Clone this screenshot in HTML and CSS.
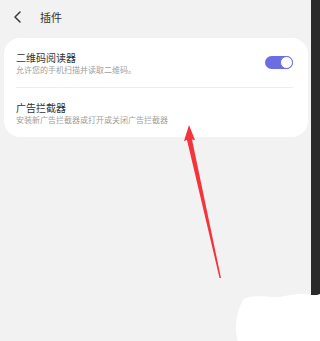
FILE: index.html
```html
<!DOCTYPE html>
<html lang="zh-CN">
<head>
    <meta charset="UTF-8">
    <meta name="viewport" content="width=device-width, initial-scale=1.0">
    <title>插件</title>
    <link rel="stylesheet" href="styles.css">
</head>
<body>
    <div class="screen">
        <div class="header">
            <svg class="back-icon" width="10" height="12" viewBox="0 0 10 12">
                <path d="M7 1 L2 6 L7 11" fill="none" stroke="#3a3a3a" stroke-width="1.5" stroke-linecap="round" stroke-linejoin="round"/>
            </svg>
            <span class="title">插件</span>
        </div>

        <div class="card">
            <div class="row">
                <div class="row-text">
                    <div class="row-title">二维码阅读器</div>
                    <div class="row-desc">允许您的手机扫描并读取二维码。</div>
                </div>
                <div class="toggle on"><span class="knob"></span></div>
            </div>
            <div class="divider"></div>
            <div class="row">
                <div class="row-text">
                    <div class="row-title">广告拦截器</div>
                    <div class="row-desc">安装新广告拦截器或打开或关闭广告拦截器</div>
                </div>
            </div>
        </div>

        <svg class="arrow" width="320" height="341" viewBox="0 0 320 341">
            <rect x="311" y="0" width="9" height="295" fill="#2a2a2a"/>
            <polygon points="189,125 195,140 192,139.5 221,278 219.5,278 187,140 184,141" fill="#f5333a"/>
            <path d="M243 300 C250 294 266 297 280 297 C294 294 306 292 314 296 L320 294 L320 341 L238 341 C234 330 236 312 243 300 Z" fill="#ffffff"/>
        </svg>
    </div>
</body>
</html>
```

FILE: styles.css
```css
body {
    margin: 0;
    font-family: "Noto Sans CJK SC", "Noto Sans", sans-serif;
    background-color: #f2f2f2;
}
.screen {
    position: relative;
    width: 320px;
    height: 341px;
    overflow: hidden;
    background-color: #f2f2f2;
}
.header {
    display: flex;
    align-items: center;
    height: 34px;
    padding-left: 13px;
}
.back-icon {
    margin-right: 17px;
}
.title {
    font-size: 11px;
    color: #333;
}
.card {
    margin: 4px 12px 0 4px;
    background-color: #fff;
    border-radius: 16px;
    padding: 0 15px 0 12px;
}
.row {
    display: flex;
    align-items: center;
    height: 49px;
}
.row-text {
    flex: 1;
}
.row-title {
    font-size: 10px;
    color: #333;
    line-height: 13px;
}
.row-desc {
    font-size: 8px;
    color: #a0a0a0;
    line-height: 11px;
}
.divider {
    height: 1px;
    background-color: #eeeeee;
}
.toggle {
    position: relative;
    width: 28px;
    height: 13px;
    border-radius: 7px;
    background-color: #6a6ee2;
}
.toggle .knob {
    position: absolute;
    right: 0;
    top: 0;
    width: 11px;
    height: 11px;
    border-radius: 50%;
    background-color: #fff;
    border: 1px solid #6a6ee2;
}
.arrow {
    position: absolute;
    left: 0;
    top: 0;
}
```
